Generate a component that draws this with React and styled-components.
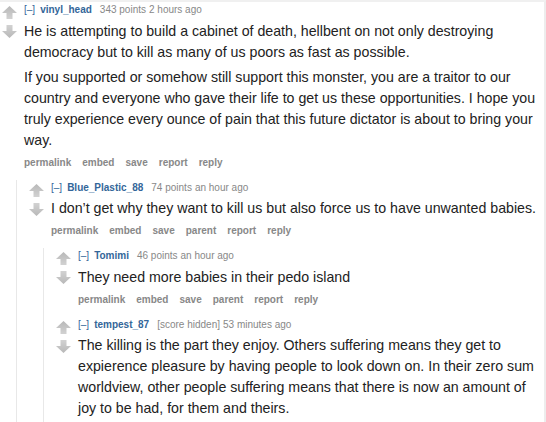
import React from 'react'
import styled, { createGlobalStyle } from "styled-components"

const GlobalStyle = createGlobalStyle`
    body {
        margin: 0;
        background: #fff;
        font-family: "Liberation Sans", Arial, sans-serif;
    }
`;

const thread = {
    author: "vinyl_head",
    score: "343 points",
    time: "2 hours ago",
    body: [
        "He is attempting to build a cabinet of death, hellbent on not only destroying democracy but to kill as many of us poors as fast as possible.",
        "If you supported or somehow still support this monster, you are a traitor to our country and everyone who gave their life to get us these opportunities. I hope you truly experience every ounce of pain that this future dictator is about to bring your way."
    ],
    links: ["permalink", "embed", "save", "report", "reply"],
    replies: [
        {
            author: "Blue_Plastic_88",
            score: "74 points",
            time: "an hour ago",
            body: ["I don\u2019t get why they want to kill us but also force us to have unwanted babies."],
            links: ["permalink", "embed", "save", "parent", "report", "reply"],
            replies: [
                {
                    author: "Tomimi",
                    score: "46 points",
                    time: "an hour ago",
                    body: ["They need more babies in their pedo island"],
                    links: ["permalink", "embed", "save", "parent", "report", "reply"],
                    replies: []
                },
                {
                    author: "tempest_87",
                    score: "[score hidden]",
                    time: "53 minutes ago",
                    body: ["The killing is the part they enjoy. Others suffering means they get to expierence pleasure by having people to look down on. In their zero sum worldview, other people suffering means that there is now an amount of joy to be had, for them and theirs."],
                    links: ["permalink", "embed", "save", "parent", "report", "reply"],
                    replies: []
                }
            ]
        }
    ]
}

const Arrow = ({ down }) => (
    <svg width="15" height="13" viewBox="0 0 15 13" style={{ transform: down ? "rotate(180deg)" : "none" }}>
        <defs>
            <linearGradient id={down ? "gd" : "gu"} x1="0" y1="0" x2="0" y2="1">
                <stop offset="0" stopColor="#b8b8b8" />
                <stop offset="1" stopColor="#d2d2d2" />
            </linearGradient>
        </defs>
        <path d="M7.5 0 L15 7 L10.5 7 L10.5 13 L4.5 13 L4.5 7 L0 7 Z" fill={`url(#${down ? "gd" : "gu"})`} />
    </svg>
)

const Comment = ({ data }) => (
    <CommentBox>
        <MidCol>
            <Arrow />
            <Arrow down />
        </MidCol>
        <Entry>
            <Tagline>
                <Expand>[&ndash;]</Expand>
                <Author>{data.author}</Author>
                <Score>{data.score}</Score>
                <Time>{data.time}</Time>
            </Tagline>
            <Body>
                {data.body.map((p, i) => <p key={i}>{p}</p>)}
            </Body>
            <FlatList>
                {data.links.map((l) => <li key={l}>{l}</li>)}
            </FlatList>
            {data.replies.length > 0 && (
                <Children>
                    {data.replies.map((r) => <Comment key={r.author} data={r} />)}
                </Children>
            )}
        </Entry>
    </CommentBox>
)

const App = () => {
    return (
        <Page>
            <GlobalStyle />
            <Comment data={thread} />
        </Page>
    )
}

export default App

const Page = styled.div`
    width: 544px;
    height: 420px;
    overflow: hidden;
    border-top: 2px solid #f0f0f0;
    border-right: 2px solid #ededed;
    background: #fff;
`;

const CommentBox = styled.div`
    display: flex;
    padding-top: 1px;
`;

const MidCol = styled.div`
    width: 24px;
    flex-shrink: 0;
    display: flex;
    flex-direction: column;
    align-items: flex-start;
    padding-left: 2px;
    padding-top: 3px;
    gap: 6px;
    box-sizing: border-box;
`;

const Entry = styled.div`
    flex: 1;
    min-width: 0;
`;

const Tagline = styled.div`
    font-size: 10px;
    line-height: 14px;
    color: #888;
    display: flex;
    align-items: baseline;
    white-space: nowrap;
`;

const Expand = styled.span`
    color: #369;
    margin-right: 5px;
`;

const Author = styled.span`
    color: #369;
    font-weight: bold;
    margin-right: 8px;
`;

const Score = styled.span`
    margin-right: 3px;
`;

const Time = styled.span``;

const Body = styled.div`
    font-size: 14.2px;
    line-height: 21px;
    color: #222;
    margin-top: 3.5px;
    padding-right: 4px;

    p {
        margin: 0;
    }

    p + p {
        margin-top: 4px;
    }
`;

const FlatList = styled.ul`
    list-style: none;
    margin: 5px 0 10px;
    padding: 0;
    display: flex;
    gap: 11px;
    font-size: 10px;
    line-height: 14px;
    font-weight: bold;
    color: #888;
`;

const Children = styled.div`
    margin-left: -8px;
    border-left: 1px solid #e8e8e8;
    padding-left: 10px;
`;
